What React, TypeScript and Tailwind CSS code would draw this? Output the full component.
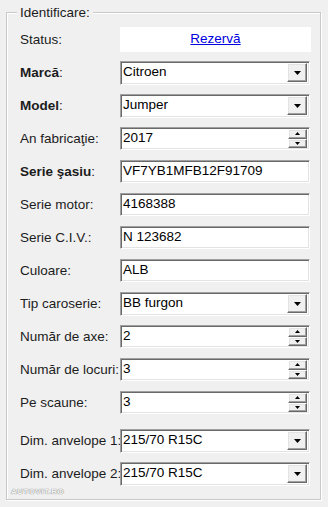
import type { ReactNode } from "react";

const font = { fontFamily: '"Liberation Sans", Arial, sans-serif' };

const sunken =
  "border border-t-[#a0a0a0] border-l-[#a0a0a0] border-b-white border-r-white shadow-[inset_1px_1px_0_#696969,inset_-1px_-1px_0_#e3e3e3] bg-white";

const raised =
  "bg-[#f0f0f0] border border-t-white border-l-white border-b-[#696969] border-r-[#696969] shadow-[inset_-1px_-1px_0_#a0a0a0,inset_1px_1px_0_#e3e3e3]";

function Label({ children, bold }: { children: ReactNode; bold?: boolean }) {
  return (
    <div className="w-[100px] shrink-0 whitespace-nowrap text-[13.5px] text-[#1c1c1c] leading-none">
      {bold ? (
        <>
          <span className="font-bold">{children}</span>:
        </>
      ) : (
        <>{children}:</>
      )}
    </div>
  );
}

function TextBox({ value }: { value: string }) {
  return (
    <div className={`w-[190px] h-[23px] flex items-center pl-[2px] text-[13.5px] text-black ${sunken}`}>
      {value}
    </div>
  );
}

function Combo({ value }: { value: string }) {
  return (
    <div className={`w-[190px] h-[24px] flex items-center pl-[2px] pr-[2px] text-[13.5px] text-black ${sunken}`}>
      <span className="flex-1">{value}</span>
      <div className={`w-[20px] h-[19px] flex items-center justify-center ${raised}`}>
        <svg width="7" height="4" viewBox="0 0 7 4">
          <polygon points="0,0 7,0 3.5,4" fill="#000" />
        </svg>
      </div>
    </div>
  );
}

function Spinner({ value }: { value: string }) {
  return (
    <div className={`w-[190px] h-[23px] flex items-center pl-[2px] pr-[2px] text-[13.5px] text-black ${sunken}`}>
      <span className="flex-1">{value}</span>
      <div className="flex flex-col w-[19px] h-[19px]">
        <div className={`flex-1 flex items-center justify-center ${raised}`}>
          <svg width="5" height="3" viewBox="0 0 5 3">
            <polygon points="2.5,0 5,3 0,3" fill="#000" />
          </svg>
        </div>
        <div className={`flex-1 flex items-center justify-center ${raised}`}>
          <svg width="5" height="3" viewBox="0 0 5 3">
            <polygon points="0,0 5,0 2.5,3" fill="#000" />
          </svg>
        </div>
      </div>
    </div>
  );
}

function Row({ label, bold, children, className = "" }: { label: string; bold?: boolean; children: ReactNode; className?: string }) {
  return (
    <div className={`flex items-center h-[23px] ${className}`}>
      <Label bold={bold}>{label}</Label>
      {children}
    </div>
  );
}

export default function App() {
  return (
    <div className="w-[328px] h-[507px] bg-[#f0f0f0] pt-[12px] pl-[6px] overflow-hidden" style={font}>
      <div className="relative w-[315px] h-[488px] border border-[#c9c9c9] shadow-[inset_1px_1px_0_#fff,1px_1px_0_#fff] pt-[15px] pl-[13px]">
        {/* legend */}
        <span className="absolute -top-[8px] left-[10px] px-[3px] bg-[#f0f0f0] text-[13.5px] text-[#1c1c1c] leading-[15px]">
          Identificare:
        </span>

        <div className="flex flex-col gap-[10px]">
          <Row label="Status">
            <div className="w-[191px] h-[25px] bg-white flex items-center justify-center text-[13.5px]">
              <span className="text-[#0000e0] underline">Rezervă</span>
            </div>
          </Row>
          <Row label="Marcă" bold>
            <Combo value="Citroen" />
          </Row>
          <Row label="Model" bold>
            <Combo value="Jumper" />
          </Row>
          <Row label="An fabricaţie">
            <Spinner value="2017" />
          </Row>
          <Row label="Serie şasiu" bold>
            <TextBox value="VF7YB1MFB12F91709" />
          </Row>
          <Row label="Serie motor">
            <TextBox value="4168388" />
          </Row>
          <Row label="Serie C.I.V.">
            <TextBox value="N 123682" />
          </Row>
          <Row label="Culoare">
            <TextBox value="ALB" />
          </Row>
          <Row label="Tip caroserie">
            <Combo value="BB furgon" />
          </Row>
          <Row label="Număr de axe">
            <Spinner value="2" />
          </Row>
          <Row label="Număr de locuri">
            <Spinner value="3" />
          </Row>
          <Row label="Pe scaune">
            <Spinner value="3" />
          </Row>
          <Row label="Dim. anvelope 1" className="mt-[5px]">
            <Combo value="215/70 R15C" />
          </Row>
          <Row label="Dim. anvelope 2">
            <Combo value="215/70 R15C" />
          </Row>
        </div>

        {/* watermark */}
        <span className="absolute left-[4px] bottom-[3px] text-[8px] font-bold leading-none tracking-[0.5px] text-[#f4f4f4] [text-shadow:0_0_1px_#8a8a8a,0_0_1px_#8a8a8a]">
          AUTOVIT.RO
        </span>
      </div>
    </div>
  );
}
